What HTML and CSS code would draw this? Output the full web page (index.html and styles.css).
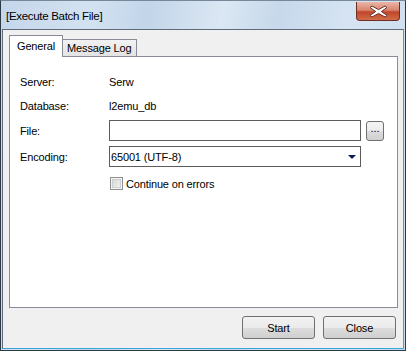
FILE: index.html
```html
<!DOCTYPE html>
<html lang="en">
<head>
  <meta charset="UTF-8" />
  <title>Execute Batch File</title>
  <link rel="stylesheet" href="styles.css">
</head>
<body>
  <div class="window">
    <!-- title bar -->
    <div class="titlebar">
      <span class="title">[Execute Batch File]</span>
      <div class="close-x">
        <svg width="19" height="13" viewBox="0 0 19 13">
          <path d="M3 1 L9.5 4.6 L16 1 L18 2.6 L12.3 6.5 L18 10.4 L16 12 L9.5 8.4 L3 12 L1 10.4 L6.7 6.5 L1 2.6 Z" fill="#fff" stroke="#6a3024" stroke-width="1"/>
        </svg>
      </div>
    </div>

    <div class="client">
      <!-- tabs -->
      <div class="tabs">
        <div class="tab active">General</div>
        <div class="tab">Message Log</div>
      </div>

      <div class="panel">
        <div class="form">
          <div class="row info">
            <span class="label">Server:</span>
            <span class="value">Serw</span>
          </div>
          <div class="row info">
            <span class="label">Database:</span>
            <span class="value">l2emu_db</span>
          </div>
          <div class="row">
            <span class="label">File:</span>
            <div class="textbox"></div>
            <button class="browse">...</button>
          </div>
          <div class="row">
            <span class="label">Encoding:</span>
            <div class="combo">
              <span>65001 (UTF-8)</span>
              <span class="arrow"></span>
            </div>
          </div>
          <div class="row check-row">
            <span class="label"></span>
            <span class="checkbox"></span>
            <span class="check-text">Continue on errors</span>
          </div>
        </div>
      </div>

      <!-- buttons -->
      <div class="buttons">
        <button class="btn">Start</button>
        <button class="btn">Close</button>
      </div>
    </div>
  </div>
</body>
</html>
```

FILE: styles.css
```css
body {
  margin: 0;
  font-family: 'Liberation Sans', Arial, sans-serif;
  font-size: 11px;
  letter-spacing: -0.15px;
  color: #000;
  background: #fff;
}

.window {
  width: 406px;
  height: 351px;
  box-sizing: border-box;
  border: 1px solid #2c3a48;
  border-top-color: #76889a;
  padding: 0 1px 1px 1px;
  display: flex;
  flex-direction: column;
  background: linear-gradient(100deg, #c4d6ea 0%, #d3e2f1 20%, #c2d5e9 32%, #dbe7f3 48%, #c6d8eb 60%, #d6e4f2 75%, #c9dbed 100%);
}

/* title bar */
.titlebar {
  height: 28px;
  display: flex;
  justify-content: space-between;
  align-items: flex-start;
  padding-left: 4px;
}

.title {
  font-size: 11.5px;
  letter-spacing: -0.3px;
  margin-top: 9px;
  color: #000;
}

.close-x {
  width: 42px;
  height: 18px;
  margin-top: 1px;
  margin-right: 4px;
  border: 1px solid #6e2e22;
  border-top: none;
  border-radius: 0 0 4px 4px;
  background: linear-gradient(#eab5a7 0%, #d98670 45%, #c1462b 55%, #d06b48 100%);
  display: flex;
  align-items: center;
  justify-content: center;
}

.client {
  flex: 1;
  background: #f0f0f0;
  border: 1px solid #5d6b7a;
  border-right-color: #39a6d9;
  border-bottom-color: #39a6d9;
  padding: 5px 5px 0 6px;
}

/* tabs */
.tabs {
  display: flex;
  align-items: flex-end;
  height: 21px;
}

.tab {
  height: 16px;
  line-height: 16px;
  padding: 0 4px;
  border: 1px solid #898c95;
  border-bottom: none;
  border-left: none;
  background: linear-gradient(#f2f2f2, #e3e3e3);
}

.tab.active {
  height: 21px;
  line-height: 20px;
  padding: 0 7px;
  margin-bottom: -1px;
  border-left: 1px solid #898c95;
  background: #fff;
  position: relative;
}

.panel {
  height: 252px;
  box-sizing: border-box;
  border: 1px solid #898c95;
  background: #fff;
  padding: 15px 0 0 10px;
}

.form {
  display: flex;
  flex-direction: column;
  gap: 5px;
}

.row {
  display: flex;
  align-items: center;
  height: 21px;
}

.row.info {
  height: 19px;
}

.label {
  width: 89px;
  flex: none;
}

.textbox,
.combo {
  width: 252px;
  height: 21px;
  box-sizing: border-box;
  border: 1px solid #5c5c5c;
  background: #fff;
}

.combo {
  display: flex;
  align-items: center;
  justify-content: space-between;
  padding: 0 4px 0 1px;
}

.arrow {
  width: 0;
  height: 0;
  border-left: 4px solid transparent;
  border-right: 4px solid transparent;
  border-top: 4px solid #0e1d4f;
}

.browse {
  width: 18px;
  height: 20px;
  margin-left: 5px;
  padding: 0 0 5px;
  border: 1px solid #707070;
  border-radius: 3px;
  background: linear-gradient(#f4f4f4 0%, #ececec 50%, #dcdcdc 51%, #d0d0d0 100%);
  font-family: inherit;
  font-size: 11px;
  line-height: 10px;
}

.check-row {
  margin-top: 1px;
  height: 21px;
}

.check-row .label {
  width: 90px;
}

.checkbox {
  width: 11px;
  height: 11px;
  border: 1px solid #8e8f8f;
  background: linear-gradient(135deg, #d4d4d4, #f6f6f6);
  box-shadow: inset 0 0 0 1px #f4f4f4, inset 0 0 0 2px #cfcfcf;
}

.check-text {
  margin-left: 3px;
}

/* bottom buttons */
.buttons {
  display: flex;
  justify-content: flex-end;
  gap: 8px;
  margin-top: 8px;
  padding-right: 2px;
}

.btn {
  width: 73px;
  height: 23px;
  border: 1px solid #707070;
  border-radius: 3px;
  background: linear-gradient(#f2f2f2 0%, #ebebeb 50%, #dddddd 51%, #cfcfcf 100%);
  font-family: inherit;
  font-size: 11px;
  letter-spacing: -0.15px;
  color: #000;
}
```
